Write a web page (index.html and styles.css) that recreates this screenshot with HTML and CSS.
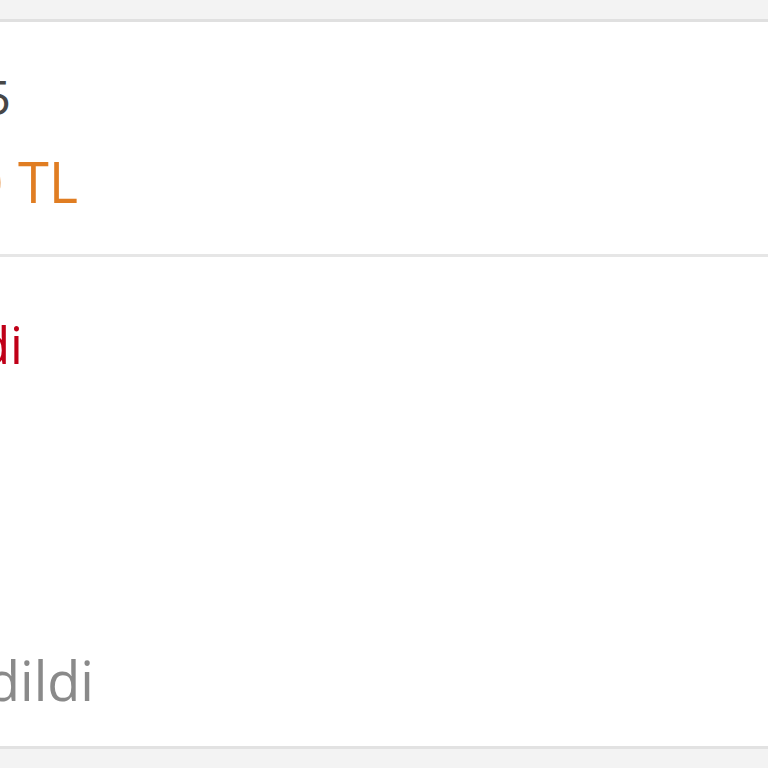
FILE: index.html
```html
<!DOCTYPE html>
<html lang="tr">
<head>
    <meta charset="UTF-8">
    <meta name="viewport" content="width=device-width, initial-scale=1.0">
    <title>Sipariş Detayı</title>
    <link rel="stylesheet" href="styles.css">
</head>
<body>
    <div class="page">
        <div class="card">
            <div class="section summary">
                <div class="line qty"><span>Adet: 5</span></div>
                <div class="line price"><span>1.250,00 TL</span></div>
            </div>
            <div class="section status">
                <div class="line unpaid"><span>Ödenmedi</span></div>
                <div class="line cancelled"><span>İptal edildi</span></div>
            </div>
        </div>
    </div>
</body>
</html>
```

FILE: styles.css
```css
body {
    margin: 0;
    padding: 0;
    background-color: #f3f3f3;
    font-family: "Open Sans", "Noto Sans", sans-serif;
    overflow: hidden;
}

.page {
    padding-top: 19px;
    height: 768px;
    box-sizing: border-box;
}

.card {
    background: white;
    border-top: 3px solid #e0e0e0;
    border-bottom: 3px solid #e2e2e2;
}

.section {
    box-sizing: border-box;
}

.summary {
    height: 235px;
    padding-top: 51px;
    border-bottom: 3px solid #e6e6e6;
}

.status {
    height: 489px;
    padding-top: 62px;
}

/* text is wider than the visible strip, so pin it by its right edge */
.line {
    display: flex;
    justify-content: flex-end;
    white-space: nowrap;
    line-height: 1;
}

.qty {
    width: 11px;
    font-size: 48px;
    color: #474747;
}

.price {
    width: 78px;
    margin-top: 32px;
    font-size: 56px;
    color: #e07d22;
}

.unpaid {
    width: 23px;
    font-size: 51px;
    color: #c00018;
}

.cancelled {
    width: 94px;
    margin-top: 283px;
    font-size: 54px;
    color: #8a8a8a;
}
```
